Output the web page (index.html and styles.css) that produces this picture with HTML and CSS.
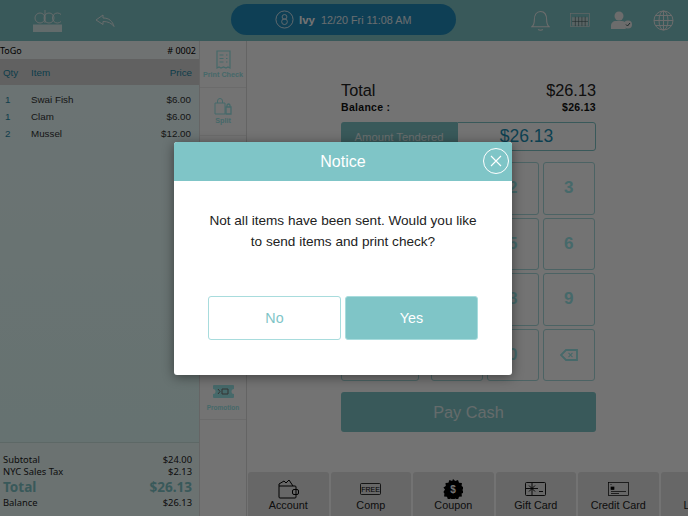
FILE: index.html
```html
<!DOCTYPE html>
<html lang="en">
<head>
<meta charset="utf-8">
<title>POS Payment</title>
<link rel="stylesheet" href="styles.css">
</head>
<body>
<div class="app">
  <header class="topbar">
    <div class="brand">
      <svg class="logo" width="30" height="24" viewBox="0 0 30 24" fill="none" stroke="#f4f4f4" stroke-width=".8">
        <circle cx="7" cy="9" r="5"/><path d="M12 1v13"/>
        <circle cx="16" cy="9" r="5"/>
        <path d="M28 5.500a5 5 0 1 0 0 7"/>
        <rect x="0" y="15.500" width="29" height="7.500" fill="#fff" stroke="none" opacity=".7"/>
      </svg>
      <svg class="back" width="20" height="13" viewBox="0 0 20 13" fill="none" stroke="#e4eeee" stroke-width="1">
        <path d="M1 6 8 1v3c6 0 9.500 3 11 8.500-2.500-3.500-6-5-11-5v3z"/>
      </svg>
    </div>
    <div class="pill">
      <svg width="19" height="19" viewBox="0 0 20 20" fill="none" stroke="#dcecf2" stroke-width="1">
        <circle cx="10" cy="10" r="9"/><circle cx="10" cy="7.300" r="2.500"/><circle cx="10" cy="12.300" r="3"/>
      </svg>
      <b class="user">Ivy</b><span class="clock">12/20 Fri 11:08 AM</span>
    </div>
    <div class="tools">
      <svg width="19" height="22" viewBox="0 0 20 23" fill="none" stroke="#f0f0f0" stroke-width="1.100">
        <path d="M1 17.500c2-1.500 2.500-3 2.500-7C3.500 5 6 1.500 10 1.500s6.500 3.500 6.500 9c0 4 .5 5.500 2.500 7z"/><path d="M7.500 20.500q2.500 1.500 5 0"/>
      </svg>
      <svg width="21" height="15" viewBox="0 0 22 16" fill="#e4e4e4" stroke="#e4e4e4">
        <rect x=".5" y=".5" width="20" height="14" fill="none" stroke-width=".7"/>
        <rect x="2" y="4.500" width="17" height="9" stroke="none" opacity=".7"/>
        <path d="M5.500 4v10M9 4v10M12.500 4v10M16 4v10M2 9h17" stroke="#39585a" stroke-width=".6"/>
      </svg>
      <svg width="22" height="19" viewBox="0 0 22 19" fill="#f0f0f0">
        <circle cx="8" cy="5" r="4.500"/><path d="M0 18v-3c0-3 2-5 5-5h6c2 0 3 1 4 2-1.500 1.500-1.500 4 0 6z"/><circle cx="17" cy="13.500" r="4"/>
        <path d="M15 13.500l1.500 1.500 2.500-3" fill="none" stroke="#39585a"/>
      </svg>
      <svg width="21" height="21" viewBox="0 0 21 21" fill="none" stroke="#f0f0f0" stroke-width="1">
        <circle cx="10.500" cy="10.500" r="9.500"/><ellipse cx="10.500" cy="10.500" rx="4.500" ry="9.500"/><path d="M10.500 1v19M1 10.500h19M2.500 5.500h16M2.500 15.500h16"/>
      </svg>
    </div>
  </header>

  <main class="body">
    <aside class="order">
      <div class="order-top"><span>ToGo</span><span># 0002</span></div>
      <div class="order-head"><span class="c-qty">Qty</span><span class="c-item">Item</span><span class="c-price">Price</span></div>
      <ul class="items">
        <li><span class="c-qty">1</span><span class="c-item">Swai Fish</span><span class="c-price">$6.00</span></li>
        <li><span class="c-qty">1</span><span class="c-item">Clam</span><span class="c-price">$6.00</span></li>
        <li><span class="c-qty">2</span><span class="c-item">Mussel</span><span class="c-price">$12.00</span></li>
      </ul>
      <div class="sums">
        <div class="sum"><span>Subtotal</span><span>$24.00</span></div>
        <div class="sum"><span>NYC Sales Tax</span><span>$2.13</span></div>
        <div class="sum grand"><span>Total</span><span>$26.13</span></div>
        <div class="sum"><span>Balance</span><span>$26.13</span></div>
      </div>
    </aside>

    <nav class="rail">
      <div class="rail-item">
        <svg width="15" height="19" viewBox="0 0 15 19" fill="none" stroke="#9be8ea" stroke-width="1.200">
          <path d="M1 1h13v17l-2-1-2 1-2.500-1-2.500 1-2-1-2 1z"/><path d="M3.500 5h4M3.500 8.500h4M3.500 12h4M10 5h1.500M10 8.500h1.500M10 12h1.500"/>
        </svg>
        <span>Print Check</span>
      </div>
      <div class="rail-item">
        <svg width="18" height="17" viewBox="0 0 18 17" fill="none" stroke="#9be8ea" stroke-width="1">
          <path d="M1 5h10v11H1zM3.500 5V3a2.500 2.500 0 0 1 5 0v2"/><path d="M12 9h5v7h-5zM13 9V7.500a1.500 1.500 0 0 1 3 0V9" stroke-width="1.300"/>
        </svg>
        <span>Split</span>
      </div>
      <div class="rail-item"></div><div class="rail-item"></div><div class="rail-item"></div><div class="rail-item"></div><div class="rail-item"></div>
      <div class="rail-item promo">
        <svg width="21" height="13" viewBox="0 0 21 13" fill="#9be8ea">
          <path d="M1 0h19a1 1 0 0 1 1 1v3a2.500 2.500 0 0 0 0 5v3a1 1 0 0 1-1 1H1a1 1 0 0 1-1-1V9a2.500 2.500 0 0 0 0-5V1a1 1 0 0 1 1-1z"/>
          <path d="M5 4l2 2.500L5 9M9 4h6v5H9z" fill="none" stroke="#727272"/>
        </svg>
        <span>Promotion</span>
      </div>
    </nav>

    <section class="pay">
      <div class="pay-main">
        <div class="row total"><span>Total</span><span>$26.13</span></div>
        <div class="row balance"><span>Balance :</span><span>$26.13</span></div>
        <div class="tender"><span class="tender-label">Amount Tendered</span><span class="tender-value">$26.13</span></div>
        <div class="keys">
          <div class="quick"><span class="key"></span><span class="key"></span><span class="key"></span><span class="key"></span></div>
          <div class="pad">
            <span class="key">1</span><span class="key">2</span><span class="key">3</span>
            <span class="key">4</span><span class="key">5</span><span class="key">6</span>
            <span class="key">7</span><span class="key">8</span><span class="key">9</span>
            <span class="key">.</span><span class="key">0</span>
            <span class="key">
              <svg width="18" height="12" viewBox="0 0 18 12" fill="none" stroke="#9be8ea" stroke-width="1.800">
                <path d="M6 1h11v10H6L1 6z"/><path d="M8.500 3.800l4 4.400M12.500 3.800l-4 4.400" stroke-width="1.200"/>
              </svg>
            </span>
          </div>
        </div>
        <button class="cash">Pay Cash</button>
      </div>
      <div class="tabs">
        <div class="tab">
          <svg width="21" height="20" viewBox="0 0 21 20" fill="none" stroke="#000" stroke-width="1">
            <path d="M1 7h16a1 1 0 0 1 1 1v10a1 1 0 0 1-1 1H2a1 1 0 0 1-1-1z"/><path d="M1 7V5l5-3 2 2 3-3 4 6"/><rect x="14.500" y="10.500" width="6" height="5" rx="1.500"/>
          </svg>
          <span>Account</span>
        </div>
        <div class="tab">
          <svg width="21" height="12" viewBox="0 0 21 12" fill="none" stroke="#000" stroke-width=".8">
            <rect x=".5" y=".5" width="20" height="11" rx="1"/>
            <text x="10.500" y="8.600" text-anchor="middle" class="free">FREE</text>
          </svg>
          <span>Comp</span>
        </div>
        <div class="tab">
          <svg width="20" height="20" viewBox="0 0 20 20">
            <path fill="#000" d="M10 0l2.200 2 2.800-1 1 2.800 2.900.3-.3 2.900 2.400 1.600-1.600 2.400 1.600 2.400-2.400 1.200.3 2.900-2.900.3-1 2.800-2.800-1-2.200 1.500-2.200-1.500-2.800 1-1-2.800-2.900-.3.300-2.900L.4 12.900l1.600-2.400L.4 8.600 2.800 7l-.3-2.900 2.900-.3 1-2.800 2.800 1z"/>
            <text x="10" y="13.800" text-anchor="middle" class="dollar">$</text>
          </svg>
          <span>Coupon</span>
        </div>
        <div class="tab">
          <svg width="21" height="14" viewBox="0 0 21 14" fill="none" stroke="#000" stroke-width=".9">
            <rect x=".5" y=".5" width="20" height="13" rx="1"/><path d="M7 1v12M1 6.500h12M4 3.500l6 6M10 3.500l-6 6M14 9.500h4"/>
          </svg>
          <span>Gift Card</span>
        </div>
        <div class="tab">
          <svg width="21" height="14" viewBox="0 0 21 14" fill="none" stroke="#000" stroke-width=".7">
            <rect x=".5" y=".5" width="20" height="13"/><rect x="3" y="5" width="3" height="2.500" fill="#000"/><path d="M3 2v1M3 9.500h15M3 11.500h8"/>
          </svg>
          <span>Credit Card</span>
        </div>
        <div class="tab tab-last"><span>L</span></div>
      </div>
    </section>
  </main>
</div>

<div class="scrim">
  <div class="modal">
    <div class="modal-head">
      <span>Notice</span>
      <span class="close">
        <svg width="12" height="12" viewBox="0 0 12 12" fill="none" stroke="#fff" stroke-width="1.100"><path d="M1 1l10 10M11 1L1 11"/></svg>
      </span>
    </div>
    <p class="modal-text">Not all items have been sent. Would you like<br>to send items and print check?</p>
    <div class="modal-actions">
      <button class="btn btn-no">No</button>
      <button class="btn btn-yes">Yes</button>
    </div>
  </div>
</div>
</body>
</html>
```

FILE: styles.css
```css
* { box-sizing: border-box; }
html, body { margin: 0; padding: 0; }
body {
  width: 688px;
  height: 516px;
  overflow: hidden;
  position: relative;
  background: #fff;
  font-family: "Liberation Sans", Arial, sans-serif;
  color: #000;
}
.app { display: flex; flex-direction: column; height: 516px; }

.topbar {
  flex: 0 0 41px;
  background: #7fc5c7;
  display: flex;
  align-items: center;
  position: relative;
}
.brand { display: flex; align-items: center; width: 231px; padding: 0 0 0 33px; gap: 32px; }
.pill {
  width: 225px;
  height: 31px;
  margin-top: -2px;
  border-radius: 16px;
  background: #218cbd;
  display: flex;
  align-items: center;
  padding-left: 44px;
  color: #fff;
  font-size: 11.500px;
}
.pill svg { margin: 0 5px 0 0; }
.user { font-size: 11.500px; margin-right: 6px; }
.clock { color: #e8f2f6; font-size: 10.800px; }
.tools { margin-left: 75px; display: flex; align-items: center; gap: 20px; }

.body { flex: 1; display: flex; min-height: 0; }

.order {
  flex: 0 0 200px;
  background: #eafdfa;
  display: flex;
  flex-direction: column;
  border-right: 1px solid #e0e0e0;
}
.order-top {
  height: 18px;
  display: flex;
  justify-content: space-between;
  align-items: center;
  padding-right: 3px;
  font: 9px "Noto Sans", "Open Sans", sans-serif;
  background: #f6fdfc;
}
.order-head {
  height: 26px;
  display: flex;
  align-items: center;
  background: #d8d8d8;
  color: #2488a6;
  font-size: 9.800px;
}
.items {
  list-style: none;
  margin: 0;
  padding: 6px 0 0;
  flex: 1;
  background: linear-gradient(#eeffff, #e2fdfa);
  font-size: 9.800px;
  color: #333;
}
.items li { height: 17px; display: flex; align-items: center; }
.items .c-qty { color: #1f8aa8; }
.c-qty { width: 31px; padding-left: 5px; }
.order-head .c-qty { padding-left: 3px; }
.c-item { flex: 1; }
.c-price { padding-right: 8px; }
.order-head .c-price { padding-right: 7px; }

.sums {
  height: 74px;
  padding: 11px 7px 0 3px;
  background: #eefdfb;
  border-top: 1px solid #cfe6e3;
  font: 9.400px/12px "Noto Sans", "Open Sans", sans-serif;
  color: #222;
}
.sum { display: flex; justify-content: space-between; }
.grand { color: #7fc5c7; font-size: 13.500px; font-weight: 700; line-height: 18px; height: 19px; }

.rail { flex: 0 0 47px; display: flex; flex-direction: column; border-right: 1px solid #ddd; }
.rail-item {
  height: 47.400px;
  border-bottom: 1px solid #eee;
  display: flex;
  flex-direction: column;
  align-items: center;
  justify-content: center;
  gap: 1px;
  color: #9be8ea;
  font-size: 7.200px;
  font-weight: 700;
}
.rail-item.promo { font-size: 6.500px; gap: 6px; padding-top: 5px; }

.pay { flex: 1; display: flex; flex-direction: column; min-width: 0; }
.pay-main { flex: 1; padding: 41px 0 0 94px; width: 349px; }
.row { display: flex; justify-content: space-between; }
.total { font-size: 16.300px; height: 17px; line-height: 17px; margin-bottom: 1px; color: #222; }
.balance { font-size: 10.500px; font-weight: 700; height: 15px; line-height: 15px; color: #111; letter-spacing: .3px; }
.tender { display: flex; height: 29px; margin-top: 7px; }
.tender-label {
  width: 116px;
  background: #7fc5c7;
  color: #e8f4f4;
  font-size: 11.300px;
  display: flex;
  align-items: center;
  justify-content: center;
  border-radius: 3px 0 0 0;
}
.tender-value {
  flex: 1;
  border: 1px solid #7fc5c7;
  border-radius: 0 3px 3px 0;
  color: #1c8fb4;
  font-size: 17.500px;
  display: flex;
  align-items: center;
  justify-content: center;
}
.keys { display: flex; margin-top: 11px; padding-right: 1px; justify-content: space-between; }
.quick { display: grid; grid-template-rows: repeat(4, 52.500px); gap: 3px; width: 78px; }
.pad { display: grid; grid-template-columns: repeat(3, 52.500px); grid-template-rows: repeat(4, 52.500px); gap: 3px 3.500px; }
.key {
  border: 1px solid #a8dcdd;
  border-radius: 3px;
  display: flex;
  align-items: center;
  justify-content: center;
  color: #9be8ea;
  font-size: 17px;
  font-weight: 700;
}
.cash {
  display: block;
  width: 255px;
  height: 40px;
  margin-top: 11px;
  background: #7fc5c7;
  border: 0;
  border-radius: 3px;
  color: #dfeeee;
  font: 16.300px "Liberation Sans", Arial, sans-serif;
}
.tabs { display: flex; gap: 2px; height: 44px; padding-left: 1px; overflow: hidden; }
.tab {
  flex: 0 0 80.500px;
  background: #e4e4e4;
  border-radius: 3px 3px 0 0;
  display: grid;
  grid-template-rows: 21px 1fr;
  justify-items: center;
  align-items: center;
  padding-top: 6px;
  font-size: 10.800px;
  color: #222;
}
.tab span { grid-row: 2; padding-bottom: 5px; }
.tab-last { justify-items: start; padding-left: 23px; }
.free { font: 7px "Liberation Sans", Arial, sans-serif; fill: #000; stroke: none; }
.dollar { font: 700 10px "Liberation Sans", Arial, sans-serif; fill: #fff; }

.scrim {
  position: absolute;
  inset: 0;
  background: rgba(0, 0, 0, .55);
}
.modal {
  position: absolute;
  left: 174px;
  top: 142px;
  width: 338px;
  height: 233px;
  background: #fff;
  border-radius: 3px;
  box-shadow: 0 2px 12px rgba(0, 0, 0, .45);
  display: flex;
  flex-direction: column;
}
.modal-head {
  height: 39px;
  flex: none;
  background: #7fc5c7;
  color: #fff;
  font-size: 16px;
  display: flex;
  align-items: center;
  justify-content: center;
  border-radius: 3px 3px 0 0;
}
.close {
  position: absolute;
  right: 3px;
  top: 6px;
  width: 26px;
  height: 26px;
  border: 1.200px solid #fff;
  border-radius: 50%;
  display: flex;
  align-items: center;
  justify-content: center;
}
.modal-text {
  margin: 29px 0 0;
  text-align: center;
  font-size: 13.600px;
  line-height: 21px;
  color: #222;
}
.modal-actions { display: flex; gap: 4px; margin: 44px 0 0 34px; }
.btn {
  width: 133px;
  height: 44px;
  border-radius: 3px;
  font: 14.300px "Liberation Sans", Arial, sans-serif;
}
.btn-no { background: #fff; border: 1px solid #a8dcdd; color: #7fc5c7; }
.btn-yes { background: #7fc5c7; border: 1px solid #a8dcdd; color: #fff; }
```
